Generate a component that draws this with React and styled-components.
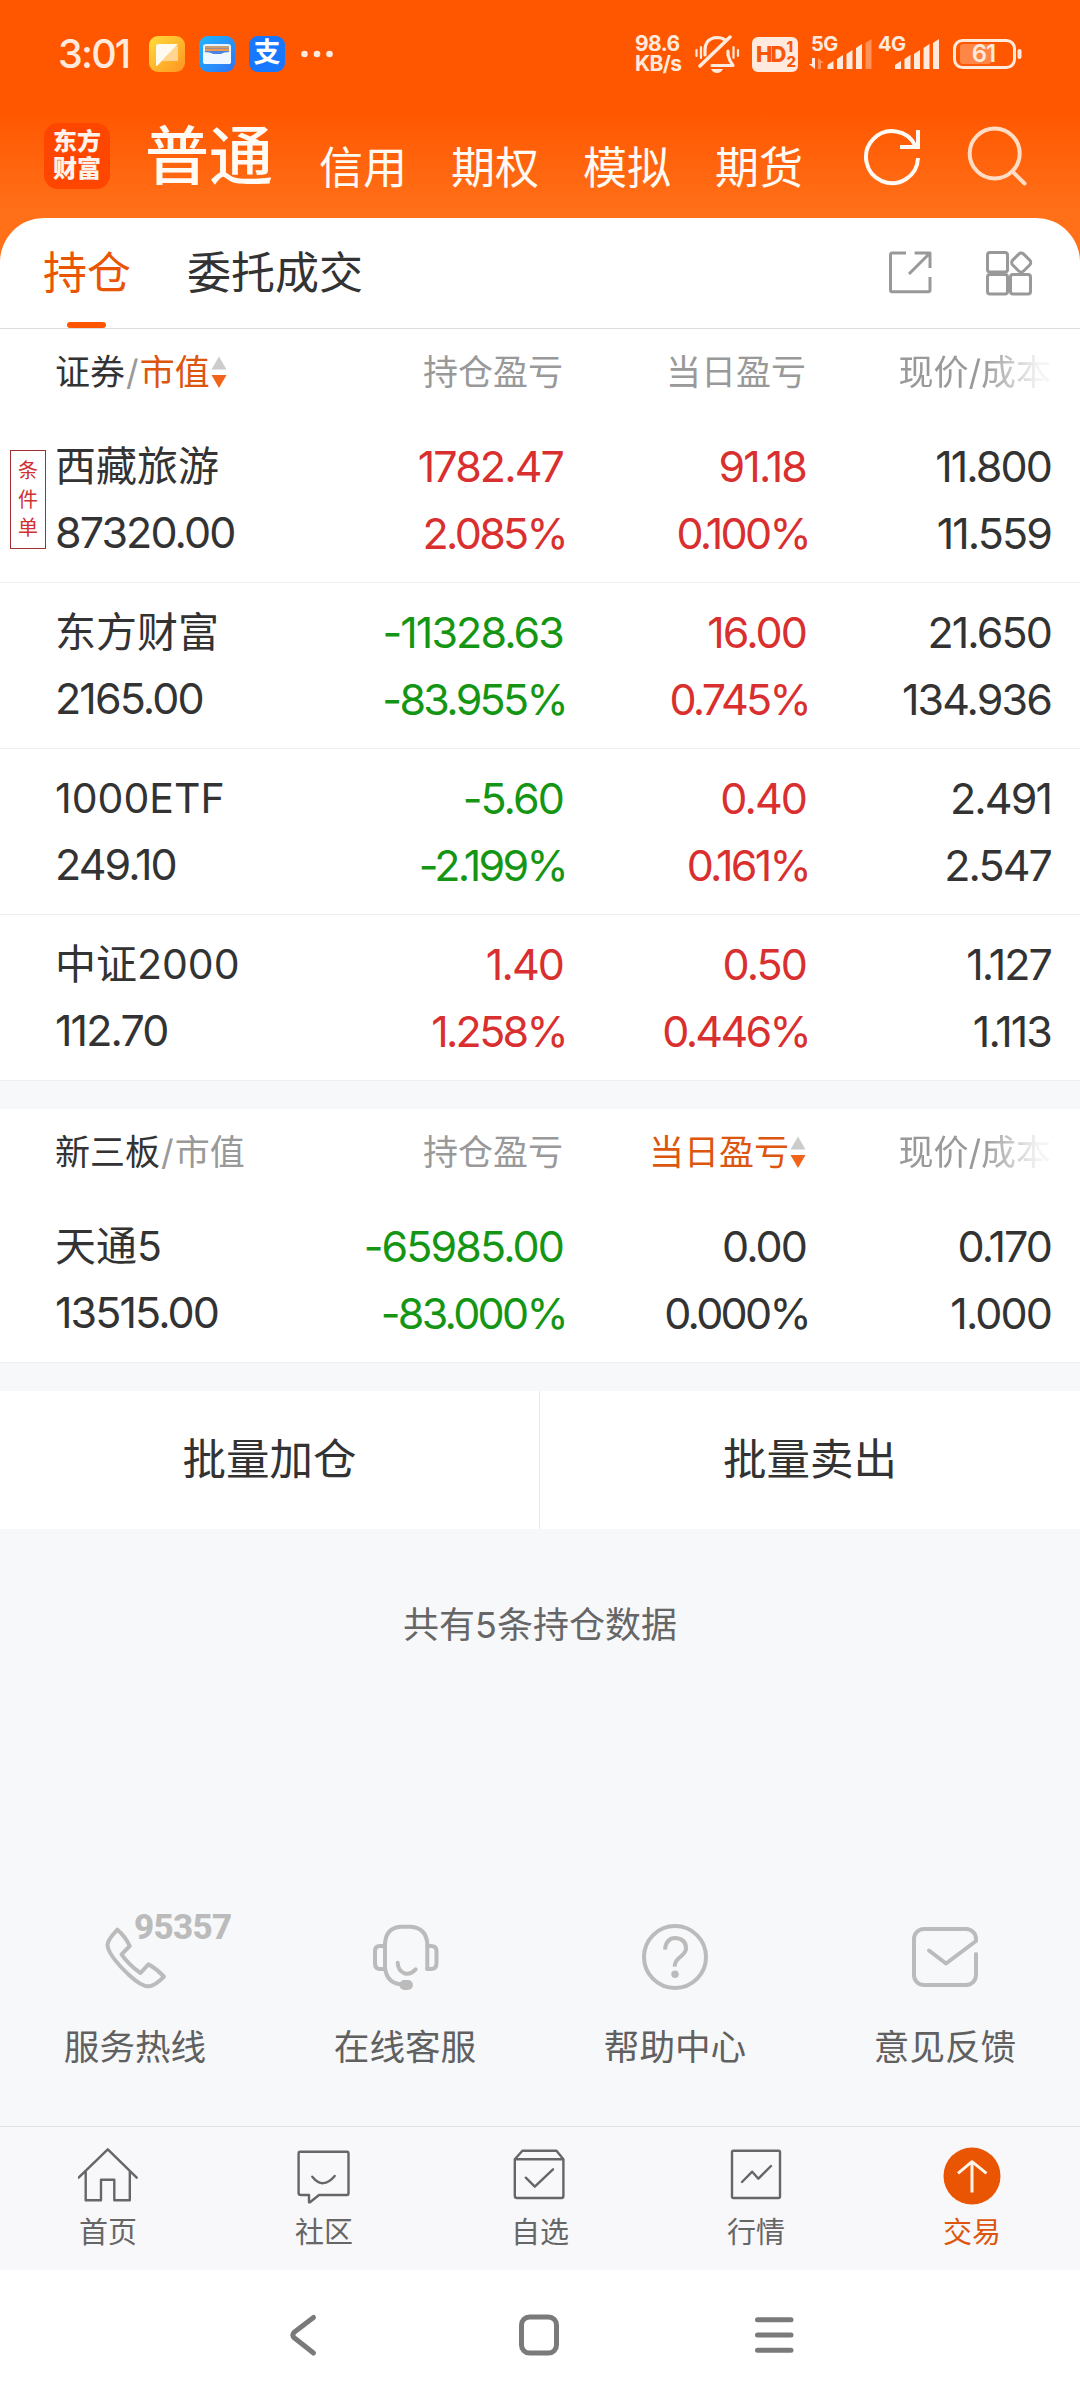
import React from 'react';
import styled, { createGlobalStyle } from 'styled-components';

const GlobalStyle = createGlobalStyle`
  * {
    box-sizing: border-box;
  }

  body {
    margin: 0;
    background-color: #f7f8fa;
    font-family: Inter, 'Noto Sans CJK SC', sans-serif;
    color: #333333;
  }
`;

const colors = {
  red: '#d9302f',
  green: '#149614',
  dark: '#333333',
};

const Screen = styled.div`
  width: 1080px;
  height: 2400px;
  display: flex;
  flex-direction: column;
  background-color: #f7f8fa;
  overflow: hidden;
`;

const Hero = styled.div`
  height: 262px;
  margin-bottom: -44px;
  flex-shrink: 0;
  background: linear-gradient(#ff5700 0, #ff5700 110px, #ff7019 212px);
`;

const StatusBar = styled.div`
  height: 108px;
  display: flex;
  align-items: center;
  padding: 0 58px 0 58px;
  color: #ffeadd;
`;

const Clock = styled.span`
  width: 91px;
  font-size: 39.5px;
  font-weight: 500;
  line-height: 40px;
  letter-spacing: -1.8px;
`;

const AppIcons = styled.div`
  display: flex;
  align-items: center;
  gap: 14px;
`;

const StatusRight = styled.div`
  margin-left: auto;
  display: flex;
  align-items: center;
`;

const NetSpeed = styled.div`
  width: 59px;
  font-size: 21px;
  font-weight: 700;
  line-height: 20px;
  letter-spacing: -0.6px;
  white-space: nowrap;
`;

const HdBadge = styled.div`
  width: 46px;
  height: 35px;
  margin: 0 11px 0 12px;
  border-radius: 6px;
  background-color: #ffeadd;
  color: #f8560a;
  display: flex;
  align-items: center;
  justify-content: center;
  font-size: 22px;
  font-weight: 800;
  letter-spacing: -2px;
`;

const HdLines = styled.span`
  display: flex;
  flex-direction: column;
  margin-left: 2px;
  font-size: 15px;
  line-height: 15px;
`;

const Signal = styled.div`
  position: relative;
  width: 63px;
  height: 38px;
  margin-right: ${(props) => props.$gap || 0}px;
`;

const SignalLabel = styled.span`
  position: absolute;
  left: ${(props) => props.$left}px;
  top: -1px;
  font-size: 20px;
  line-height: 20px;
  font-weight: 700;
  letter-spacing: -0.6px;
`;

const Battery = styled.div`
  position: relative;
  width: 70px;
  height: 32px;
`;

const BatteryText = styled.span`
  position: absolute;
  left: 0;
  width: 63px;
  top: 6px;
  text-align: center;
  font-size: 24px;
  line-height: 20px;
  font-weight: 600;
  letter-spacing: -1px;
`;

const TopNav = styled.div`
  height: 110px;
  display: flex;
  align-items: flex-end;
  padding: 0 52px 25px 44px;
  color: #fffaf3;
`;

const Logo = styled.div`
  width: 66px;
  height: 66px;
  margin-bottom: 4px;
  border-radius: 14px;
  background-color: #ff4600;
  color: #fff2ea;
  font-size: 24px;
  font-weight: 900;
  line-height: 27px;
  text-align: center;
  padding-top: 5px;
`;

const NavItem = styled.span`
  font-size: ${(props) => (props.$active ? 64 : 44)}px;
  line-height: ${(props) => (props.$active ? 74 : 50)}px;
  font-weight: ${(props) => (props.$active ? 500 : 400)};
  margin-left: ${(props) => props.$left}px;
`;

const NavIcons = styled.div`
  margin: 0 0 5px auto;
  height: 64px;
  display: flex;
  gap: 42px;
`;

const Panel = styled.div`
  flex-shrink: 0;
  background-color: #ffffff;
  border-radius: 44px 44px 0 0;
`;

const Tabs = styled.div`
  height: 111px;
  display: flex;
  align-items: stretch;
  padding: 0 47px 0 43px;
  border-bottom: 1px solid #dddddd;
`;

const Tab = styled.div`
  position: relative;
  margin-right: 56px;
  font-size: 44px;
  line-height: 110px;
  color: ${(props) => (props.$active ? '#ea5504' : '#333333')};

  &::after {
    content: '';
    display: ${(props) => (props.$active ? 'block' : 'none')};
    position: absolute;
    left: 24px;
    bottom: 0;
    width: 39px;
    height: 6px;
    border-radius: 3px;
    background-color: #ff5500;
  }
`;

const TabIcons = styled.div`
  margin-left: auto;
  display: flex;
  align-items: center;
  gap: 50px;
`;

const Section = styled.div`
  flex-shrink: 0;
  background-color: #ffffff;
  margin-bottom: 28px;
`;

const TableHead = styled.div`
  height: 88px;
  display: grid;
  grid-template-columns: 55px 254px 254px 243px 245px;
  align-items: center;
  padding-bottom: 3px;
  font-size: 35px;
  line-height: 50px;
  color: #999999;
`;

const HeadCell = styled.div`
  display: flex;
  align-items: center;
  white-space: nowrap;
  justify-content: ${(props) => (props.$first ? 'flex-start' : 'flex-end')};
  ${(props) => props.$first && 'grid-column: 2;'}
  ${(props) => props.$sorted && 'color: #dc560f;'}
`;

const Strong = styled.span`
  color: #333333;
`;

const Highlight = styled.span`
  color: #dc560f;
`;

const Slash = styled.span`
  margin: 0 1px;
`;

const Faded = styled.span`
  mask-image: linear-gradient(to right, #000 55%, rgba(0, 0, 0, 0.1) 92%);
`;

const Row = styled.div`
  height: 166px;
  display: grid;
  grid-template-columns: 55px 254px 254px 243px 245px;
  align-items: center;
  border-bottom: 1px solid #eeeeee;
`;

const OrderTag = styled.div`
  width: 36px;
  height: 99px;
  margin-left: 10px;
  border: 1px solid #a03030;
  color: #d03030;
  font-size: 20px;
  line-height: 28.5px;
  padding-top: 6px;
  display: flex;
  flex-direction: column;
  align-items: center;
`;

const Cell = styled.div`
  grid-column: ${(props) => props.$col};
  text-align: ${(props) => (props.$col === 2 ? 'left' : 'right')};
  color: ${(props) => props.$color || '#333333'};
  white-space: nowrap;
`;

const Name = styled.div`
  font-size: 41px;
  line-height: 66px;
`;

const Num = styled.div`
  font-size: 43px;
  line-height: 67px;
  letter-spacing: -1.9px;
`;

const Percent = styled(Num)`
  letter-spacing: -2.7px;
  margin-right: -3px;
`;

const BatchBar = styled.div`
  flex-shrink: 0;
  height: 138px;
  display: flex;
  background-color: #ffffff;
`;

const BatchButton = styled.div`
  width: 539px;
  text-align: center;
  font-size: 43.5px;
  line-height: 136px;

  & + & {
    width: 541px;
    border-left: 1px solid #e8e8e8;
  }
`;

const Summary = styled.div`
  margin-top: 71px;
  text-align: center;
  font-size: 36px;
  line-height: 50px;
  color: #666666;
`;

const Services = styled.div`
  margin-top: auto;
  height: 202px;
  display: flex;
`;

const Service = styled.div`
  position: relative;
  flex: 1;
  display: flex;
  flex-direction: column;
  align-items: center;
  font-size: 35.6px;
  line-height: 50px;
  gap: 32px;
  color: #606060;
`;

const HotlineNumber = styled.span`
  position: absolute;
  left: 134px;
  top: -16px;
  font-family: Roboto, sans-serif;
  font-size: 35px;
  font-weight: 800;
  line-height: 40px;
  letter-spacing: -0.7px;
  color: #bbbbbb;
`;

const TabBar = styled.div`
  flex-shrink: 0;
  height: 144px;
  display: flex;
  border-top: 1px solid #e3e3e5;
  background-color: #f8f8fa;
`;

const TabItem = styled.div`
  flex: 1;
  display: flex;
  flex-direction: column;
  align-items: center;
  padding-top: 18px;
  gap: 8px;
  font-size: 29px;
  line-height: 40px;
  color: ${(props) => (props.$active ? '#dc560f' : '#666666')};
`;

const SystemNav = styled.div`
  flex-shrink: 0;
  height: 130px;
  display: flex;
  align-items: center;
  justify-content: center;
  gap: 187px;
  padding-right: 2px;
  background-color: #ffffff;
`;

const Icon = ({ w, h = w, color = 'currentColor', stroke = 2, children }) => (
  <svg
    width={w}
    height={h}
    viewBox={`0 0 ${w} ${h}`}
    fill="none"
    stroke={color}
    strokeWidth={stroke}
    strokeLinecap="round"
    strokeLinejoin="round"
  >
    {children}
  </svg>
);

const NotesIcon = () => (
  <svg width="36" height="36" viewBox="0 0 36 36">
    <defs>
      <linearGradient id="notes" x1="0" y1="0" x2="1" y2="1">
        <stop offset="0" stopColor="#ffdc3c" />
        <stop offset="1" stopColor="#ff9420" />
      </linearGradient>
    </defs>
    <rect width="36" height="36" rx="9" fill="url(#notes)" />
    <path d="M27 10h1q1 0 1 1v13q0 1-1 1H13z" fill="#ffd591" />
    <path d="M9 8h20L8 30q-1 0-1-1V10q0-2 2-2z" fill="#fffaf0" />
  </svg>
);

const WalletIcon = () => (
  <svg width="36" height="36" viewBox="0 0 36 36">
    <defs>
      <linearGradient id="wallet" x1="0" y1="0" x2="1" y2="1">
        <stop offset="0" stopColor="#1fb6ff" />
        <stop offset="1" stopColor="#2f74f5" />
      </linearGradient>
    </defs>
    <rect width="36" height="36" rx="9" fill="url(#wallet)" />
    <rect x="4" y="8" width="28" height="20" rx="3" fill="#e6f2ff" />
    <path d="M6 10h24v8H6z" fill="#4a84e0" />
    <path d="M6 10h24v2H6z" fill="#c9a070" />
    <path d="M6 12.500h24v2.500H6z" fill="#f09a4a" />
    <path d="M4 16q8 0 10 2 4 1.500 8 0 2-2 10-2v10q0 2-3 2H7q-3 0-3-2z" fill="#f0f7ff" />
  </svg>
);

const PayBox = styled.div`
  width: 36px;
  height: 36px;
  border-radius: 9px;
  background-color: #1777ff;
  color: #ffffff;
  font-size: 27px;
  line-height: 34px;
  font-weight: 700;
  text-align: center;
`;

const MuteIcon = () => (
  <Icon w={46} h={38} stroke={3.2}>
    <path d="M11 20V16Q11 3 23 2.500 28 2.500 31 5M34 16V20Q35 25 39 30.500H18" />
    <path d="M6 31 36 2" strokeWidth="3.500" />
    <path d="M17 34h12q-2 4-6 4t-6-4z" fill="currentColor" stroke="none" />
    <path d="M2.500 15v6M7 12v11M39.500 12v11M44 15v6" strokeWidth="2.200" />
  </Icon>
);

const SignalBars = ({ x, dimLast }) => (
  <svg width="63" height="38" viewBox="0 0 63 38" fill="currentColor">
    <path d={`M${x} 34V30l6-4v8z`} />
    <path d={`M${x + 9.500} 34V24l6-4v14z`} />
    <path d={`M${x + 19} 34V19l6-4v19z`} />
    <path d={`M${x + 28.500} 34V13l6-4v25z`} />
    <path d={`M${x + 38} 34V8l6-4v30z`} opacity={dimLast ? 0.4 : 1} />
    {dimLast && <path d="M6 23v11l-6-5h3v-6z" />}
    {dimLast && <path d="M9 34V23l6 5h-3v6z" opacity="0.4" />}
  </svg>
);

const SortArrows = () => (
  <svg width="17" height="32" viewBox="0 0 17 32">
    <path d="M9 0.500 16.500 13.500h-15z" fill="#cccccc" />
    <path d="M9 32 1.500 19h15z" fill="#f26419" />
  </svg>
);

const serviceIcons = {
  phone: (
    <path
      d="M13.400 3.700Q21 10 25.800 20L17.500 28.300Q25 39 36.500 47L44.400 38.300Q53 43 60 50.700 51 60 45 60.300 38 61 25 49 4 29 3.500 19 3.500 14 13.400 3.700Z"
      transform="translate(2 2)"
    />
  ),
  headset: (
    <>
      <path d="M55.300 45V19.300Q54 4 38.800 2.700H28.500Q14 4 13 19.300V44Q15 59 28.500 60.300" />
      <path d="M13 22H8Q3 22 3 27V39Q3 45 8 45H13M55.300 22H59Q64.500 22 64.500 27V39Q64.500 45 59 45H55.300" />
      <rect x="27.400" y="56" width="13.500" height="10" rx="5" fill="currentColor" stroke="none" />
      <path d="M25.700 38.700Q26 47 33 49.500 39 50.500 43.600 45.300" />
    </>
  ),
  help: (
    <>
      <circle cx="33" cy="33" r="31" />
      <path d="M23 25.700Q24 14 33.500 14 44.500 15 44 25 43.500 29 37 34 32.500 38 32.700 42.700" strokeLinecap="butt" />
      <circle cx="33" cy="50.300" r="3.700" fill="currentColor" stroke="none" />
    </>
  ),
  mail: (
    <path d="M64 30V51A10 10 0 0 1 54 61H12A10 10 0 0 1 2 51V15A10 10 0 0 1 12 5H54A10 10 0 0 1 64 15V17L34 39.500 17 26.500" />
  ),
};

const tabIcons = {
  home: (
    <path d="M0.600 32.700 29.800 4.300 58.700 32.700M7.700 27V55.300H23V34.700H36.300V55.300H51.800V27" />
  ),
  chat: (
    <>
      <path d="M6 6.700H53Q54.500 6.700 54.500 8.500V48Q54.500 50 53 50H25L16 57.300H15V50H7Q4.600 50 4.600 48V8.500Q4.600 6.700 6 6.700Z" />
      <path d="M18.300 31.700Q29 45 40.700 31" />
    </>
  ),
  box: (
    <>
      <path d="M4.800 14.300 12.400 5.700H46.500L53.400 14.300V51Q53.400 53 51.500 53H7Q4.800 53 4.800 51ZM4.800 14.300H53.400" />
      <path d="M15.800 32.700 24.800 41.700 43 24.300" />
    </>
  ),
  chart: (
    <>
      <rect x="6" y="5.700" width="48" height="47.300" rx="1.500" />
      <path d="M16 37 26.200 26.700 32.400 33.700 45 21" />
    </>
  ),
  trade: (
    <>
      <circle cx="30" cy="31" r="28.500" fill="#ea5504" stroke="none" />
      <path d="M30 47.500V17.500M16 28.300 30 16.700 44.500 28.300" stroke="#fff5e6" strokeWidth="3" strokeLinecap="butt" />
    </>
  ),
};

const holdings = [
  { name: '西藏旅游', value: '87320.00', profit: ['1782.47', '2.085%', 'red'], day: ['91.18', '0.100%', 'red'], price: ['11.800', '11.559'], tag: '条件单' },
  { name: '东方财富', value: '2165.00', profit: ['-11328.63', '-83.955%', 'green'], day: ['16.00', '0.745%', 'red'], price: ['21.650', '134.936'] },
  { name: '1000ETF', value: '249.10', profit: ['-5.60', '-2.199%', 'green'], day: ['0.40', '0.161%', 'red'], price: ['2.491', '2.547'] },
  { name: '中证2000', value: '112.70', profit: ['1.40', '1.258%', 'red'], day: ['0.50', '0.446%', 'red'], price: ['1.127', '1.113'] },
];

const otcHoldings = [
  { name: '天通5', value: '13515.00', profit: ['-65985.00', '-83.000%', 'green'], day: ['0.00', '0.000%', 'dark'], price: ['0.170', '1.000'] },
];

const services = [
  { icon: 'phone', label: '服务热线', number: '95357' },
  { icon: 'headset', label: '在线客服' },
  { icon: 'help', label: '帮助中心' },
  { icon: 'mail', label: '意见反馈' },
];

const tabItems = [
  { icon: 'home', label: '首页' },
  { icon: 'chat', label: '社区' },
  { icon: 'box', label: '自选' },
  { icon: 'chart', label: '行情' },
  { icon: 'trade', label: '交易', active: true },
];

const HoldingRow = ({ item }) => (
  <Row>
    {item.tag && (
      <OrderTag>
        {item.tag.split('').map((char) => (
          <span key={char}>{char}</span>
        ))}
      </OrderTag>
    )}
    <Cell $col={2}>
      <Name>{item.name}</Name>
      <Num>{item.value}</Num>
    </Cell>
    <Cell $col={3} $color={colors[item.profit[2]]}>
      <Num>{item.profit[0]}</Num>
      <Percent>{item.profit[1]}</Percent>
    </Cell>
    <Cell $col={4} $color={colors[item.day[2]]}>
      <Num>{item.day[0]}</Num>
      <Percent>{item.day[1]}</Percent>
    </Cell>
    <Cell $col={5}>
      <Num>{item.price[0]}</Num>
      <Num>{item.price[1]}</Num>
    </Cell>
  </Row>
);

const Header = () => (
  <Hero>
    <StatusBar>
      <Clock>3:01</Clock>
      <AppIcons>
        <NotesIcon />
        <WalletIcon />
        <PayBox>支</PayBox>
        <svg width="40" height="8" viewBox="0 0 40 8" fill="currentColor">
          <circle cx="5.500" cy="4" r="3.300" />
          <circle cx="18" cy="4" r="3.300" />
          <circle cx="30.500" cy="4" r="3.300" />
        </svg>
      </AppIcons>
      <StatusRight>
        <NetSpeed>
          <div>98.6</div>
          <div>KB/s</div>
        </NetSpeed>
        <MuteIcon />
        <HdBadge>
          HD
          <HdLines>
            <span>1</span>
            <span>2</span>
          </HdLines>
        </HdBadge>
        <Signal $gap={6}>
          <SignalLabel $left={2}>5G</SignalLabel>
          <SignalBars x={18.5} dimLast />
        </Signal>
        <Signal $gap={11}>
          <SignalLabel $left={0}>4G</SignalLabel>
          <SignalBars x={17} />
        </Signal>
        <Battery>
          <svg width="70" height="32" viewBox="0 0 70 32" fill="none">
            <rect x="2.500" y="2.500" width="60" height="27" rx="8" stroke="currentColor" strokeWidth="3" />
            <rect x="8" y="6" width="31" height="20" rx="3" fill="#ff8644" />
            <rect x="65.500" y="11" width="4" height="10" rx="2" fill="currentColor" />
          </svg>
          <BatteryText>61</BatteryText>
        </Battery>
      </StatusRight>
    </StatusBar>
    <TopNav>
      <Logo>
        <div>东方</div>
        <div>财富</div>
      </Logo>
      <NavItem $active $left={35}>普通</NavItem>
      <NavItem $left={46}>信用</NavItem>
      <NavItem $left={44}>期权</NavItem>
      <NavItem $left={44}>模拟</NavItem>
      <NavItem $left={44}>期货</NavItem>
      <NavIcons>
        <Icon w={60} h={64} stroke={4}>
          <path d="M56 34A26 26 0 1 1 53.500 22" strokeLinecap="butt" />
          <path d="M56 6V23H38" strokeLinecap="butt" strokeLinejoin="miter" />
        </Icon>
        <Icon w={64} stroke={4} color="#ffdcc4">
          <circle cx="30.700" cy="29.500" r="25" />
          <path d="M48.500 47.500 60.500 59.500" />
        </Icon>
      </NavIcons>
    </TopNav>
  </Hero>
);

const App = () => {
  return (
    <Screen>
      <GlobalStyle />
      <Header />
      <Panel>
        <Tabs>
          <Tab $active>持仓</Tab>
          <Tab>委托成交</Tab>
          <TabIcons>
            <Icon w={48} stroke={3} color="#999999">
              <path d="M19 4H5Q3.500 4 3.500 6V41Q3.500 42.700 5 42.700H41Q43 42.700 43 41V28M27.600 4H43V19M22 25 42 5" strokeLinecap="butt" />
            </Icon>
            <Icon w={48} stroke={3} color="#999999">
              <rect x="2.500" y="3.500" width="20" height="19.500" rx="2.500" />
              <rect x="2.500" y="25.500" width="20" height="19.500" rx="2.500" />
              <rect x="25.500" y="25.500" width="20" height="19.500" rx="2.500" />
              <rect x="28.500" y="5.800" width="15.500" height="15.500" rx="3.500" transform="rotate(45 36.200 13.500)" />
            </Icon>
          </TabIcons>
        </Tabs>
      </Panel>
      <Section>
        <TableHead>
          <HeadCell $first>
            <Strong>证券</Strong>
            <Slash>/</Slash>
            <Highlight>市值</Highlight>
            <SortArrows />
          </HeadCell>
          <HeadCell>持仓盈亏</HeadCell>
          <HeadCell>当日盈亏</HeadCell>
          <HeadCell>
            <Faded>现价/成本</Faded>
          </HeadCell>
        </TableHead>
        {holdings.map((item) => (
          <HoldingRow key={item.name} item={item} />
        ))}
      </Section>
      <Section>
        <TableHead>
          <HeadCell $first>
            <Strong>新三板</Strong>
            <Slash>/</Slash>
            市值
          </HeadCell>
          <HeadCell>持仓盈亏</HeadCell>
          <HeadCell $sorted>
            当日盈亏
            <SortArrows />
          </HeadCell>
          <HeadCell>
            <Faded>现价/成本</Faded>
          </HeadCell>
        </TableHead>
        {otcHoldings.map((item) => (
          <HoldingRow key={item.name} item={item} />
        ))}
      </Section>
      <BatchBar>
        <BatchButton>批量加仓</BatchButton>
        <BatchButton>批量卖出</BatchButton>
      </BatchBar>
      <Summary>共有5条持仓数据</Summary>
      <Services>
        {services.map((item) => (
          <Service key={item.label}>
            <Icon w={67} stroke={4} color="#bbbbbb">
              <g color="#bbbbbb">{serviceIcons[item.icon]}</g>
            </Icon>
            {item.number && <HotlineNumber>{item.number}</HotlineNumber>}
            <span>{item.label}</span>
          </Service>
        ))}
      </Services>
      <TabBar>
        {tabItems.map((item) => (
          <TabItem key={item.label} $active={item.active}>
            <Icon w={60} stroke={2.4}>{tabIcons[item.icon]}</Icon>
            <span>{item.label}</span>
          </TabItem>
        ))}
      </TabBar>
      <SystemNav>
        <Icon w={48} stroke={5} color="#7a7a7a">
          <path d="M33.500 6.500 14.500 21Q11 24 14.500 27L33.500 42" />
        </Icon>
        <Icon w={48} stroke={5} color="#7a7a7a">
          <rect x="6.500" y="6" width="35" height="36" rx="8" />
        </Icon>
        <Icon w={48} stroke={5} color="#7a7a7a">
          <path d="M7.500 8.700H41M7.500 24H41M7.500 39.300H41" />
        </Icon>
      </SystemNav>
    </Screen>
  );
};

export default App;
